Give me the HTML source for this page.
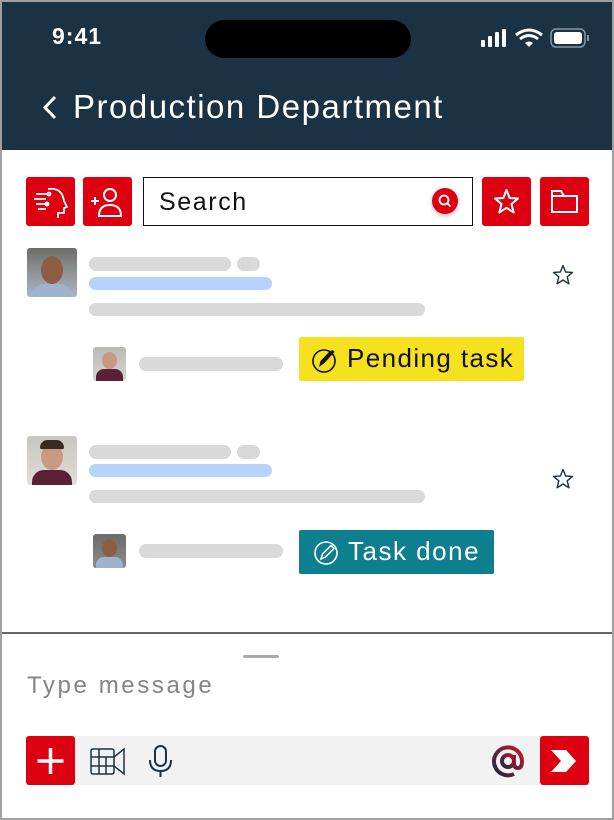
<!DOCTYPE html>
<html><head><meta charset="utf-8"><style>
*{margin:0;padding:0;box-sizing:border-box}
body{width:614px;height:820px;position:relative;background:#fff;font-family:"Liberation Sans",sans-serif;overflow:hidden}
.a{position:absolute}
.bar{position:absolute;height:14px;border-radius:7px;background:#d9d9d9}
.blue{background:#b5d3fb}
.btn{position:absolute;width:49px;height:49px;background:#dc0011;border-radius:3px}
.av{position:absolute;border-radius:3px;overflow:hidden}
</style></head><body>
<div class="a" style="left:0;top:0;width:614px;height:820px;border:2px solid #a0a0a0;border-top:2px solid #a0a0a0"></div>
<div class="a" style="left:2px;top:2px;width:610px;height:148px;background:#1b3245"></div>
<div class="a" style="left:52px;top:23px;color:#fff;font-size:23px;font-weight:bold;letter-spacing:1px">9:41</div>
<div class="a" style="left:205px;top:20px;width:206px;height:38px;background:#000;border-radius:19px"></div>
<svg class="a" style="left:478px;top:26px" width="115" height="24" viewBox="0 0 115 24">
<rect x="3" y="14" width="4" height="7" rx="1" fill="#fff"/><rect x="10" y="10" width="4" height="11" rx="1" fill="#fff"/><rect x="17" y="6" width="4" height="15" rx="1" fill="#fff"/><rect x="24" y="3" width="4" height="18" rx="1" fill="#fff"/>
<path d="M38 9 Q51 -1 64 9" stroke="#fff" stroke-width="3" fill="none"/><path d="M42 13 Q51 6 60 13" stroke="#fff" stroke-width="3" fill="none"/><path d="M47 17 L51 21 L55 17 Q51 14 47 17Z" fill="#fff"/>
<rect x="73" y="3" width="34" height="18" rx="5" stroke="#8795a3" stroke-width="1.5" fill="none"/><rect x="76" y="6" width="28" height="12" rx="3" fill="#fff"/><rect x="109" y="9" width="2" height="6" fill="#8795a3"/>
</svg>
<svg class="a" style="left:40px;top:94px" width="20" height="28"><path d="M15 3 L5 13.5 L15 24" stroke="#fff" stroke-width="3" fill="none"/></svg>
<div class="a" style="left:73px;top:88px;color:#fff;font-size:33px;letter-spacing:1.5px">Production Department</div>

<div class="btn" style="left:26px;top:177px"><svg width="49" height="49" viewBox="0 0 49 49" fill="none" stroke="#fff" stroke-width="1.8"><path d="M22 12 Q36 10 38 24 L41 30 L38 31 L38 36 L32 36 L32 41"/><path d="M10 17 H22 M8 22 H20 M10 27 H22 M12 32 H20"/><circle cx="23" cy="17" r="1.5"/><circle cx="21" cy="27" r="1.5"/></svg></div>
<div class="btn" style="left:83px;top:177px"><svg width="49" height="49" viewBox="0 0 49 49" fill="none" stroke="#fff" stroke-width="2"><circle cx="27" cy="18" r="6"/><path d="M16 39 Q16 28 27 28 Q38 28 38 39 Z"/><path d="M8 24 H16 M12 20 V28"/></svg></div>
<div class="a" style="left:143px;top:177px;width:330px;height:49px;border:1.5px solid #111;background:#fff"></div>
<div class="a" style="left:159px;top:188px;font-size:25px;color:#111;letter-spacing:1.6px">Search</div>
<div class="a" style="left:432px;top:188px;width:26px;height:26px;border-radius:50%;background:#dc0011;box-shadow:0 2px 4px rgba(0,0,0,.25)"><svg width="26" height="26"><circle cx="12" cy="12" r="4.5" stroke="#fff" stroke-width="1.8" fill="none"/><path d="M15 15 L18.5 18.5" stroke="#fff" stroke-width="1.8"/></svg></div>
<div class="btn" style="left:482px;top:177px"><svg width="49" height="49" viewBox="0 0 49 49"><path d="M24.5 13 L27.6 21 L36 21.5 L29.5 27 L31.7 35.5 L24.5 30.8 L17.3 35.5 L19.5 27 L13 21.5 L21.4 21Z" stroke="#fff" stroke-width="2" fill="none" stroke-linejoin="round"/></svg></div>
<div class="btn" style="left:540px;top:177px"><svg width="49" height="49" viewBox="0 0 49 49"><path d="M12 14 H21 L24 19 H37 V35 H12 Z M12 19 H24" stroke="#fff" stroke-width="2" fill="none"/></svg></div>

<!-- message 1 -->
<div class="av" style="left:27px;top:248px;width:50px;height:49px;background:linear-gradient(#6d6b67,#8a8c8d 40%,#a9b7c7)"><div class="a" style="left:14px;top:8px;width:22px;height:28px;border-radius:50%;background:#8b5e44"></div><div class="a" style="left:5px;top:36px;width:40px;height:20px;border-radius:12px 12px 0 0;background:#9fb3cc"></div></div>
<div class="bar" style="left:89px;top:257px;width:142px"></div>
<div class="bar" style="left:237px;top:257px;width:23px"></div>
<div class="bar blue" style="left:89px;top:277px;width:183px;height:13px"></div>
<div class="bar" style="left:89px;top:303px;width:336px;height:13px"></div>
<svg class="a" style="left:551px;top:263px" width="24" height="24" viewBox="0 0 24 24"><path d="M12 2.5 L14.6 9 L21.5 9.4 L16.2 13.8 L17.9 20.8 L12 17 L6.1 20.8 L7.8 13.8 L2.5 9.4 L9.4 9Z" stroke="#1b3245" stroke-width="1.4" fill="none" stroke-linejoin="round"/></svg>
<div class="av" style="left:93px;top:347px;width:33px;height:34px;background:linear-gradient(#b9b9b5,#d6d4cf)"><div class="a" style="left:9px;top:5px;width:15px;height:17px;border-radius:50%;background:#c99a82"></div><div class="a" style="left:3px;top:22px;width:27px;height:14px;border-radius:8px 8px 0 0;background:#5a2136"></div></div>
<div class="bar" style="left:139px;top:357px;width:144px"></div>
<div class="a" style="left:299px;top:337px;width:225px;height:44px;background:#f6e11e;border-radius:2px"></div>
<svg class="a" style="left:310px;top:345px" width="30" height="30" viewBox="0 0 30 30"><circle cx="14" cy="16" r="11" stroke="#111" stroke-width="1.6" fill="none"/><path d="M9 22 L10.5 16 L20 6 Q23 4 24.5 7 L14.5 18 Z" fill="#111"/></svg>
<div class="a" style="left:347px;top:343px;font-size:26px;color:#111;letter-spacing:1.4px">Pending task</div>

<!-- message 2 -->
<div class="av" style="left:27px;top:436px;width:50px;height:49px;background:linear-gradient(#c8c6c1,#e0ddd7)"><div class="a" style="left:14px;top:7px;width:22px;height:27px;border-radius:50%;background:#c99a82"></div><div class="a" style="left:13px;top:4px;width:24px;height:9px;border-radius:10px 10px 2px 2px;background:#3a2a20"></div><div class="a" style="left:5px;top:34px;width:40px;height:20px;border-radius:12px 12px 0 0;background:#5a2136"></div></div>
<div class="bar" style="left:89px;top:445px;width:142px"></div>
<div class="bar" style="left:237px;top:445px;width:23px"></div>
<div class="bar blue" style="left:89px;top:464px;width:183px;height:13px"></div>
<div class="bar" style="left:89px;top:490px;width:336px;height:13px"></div>
<svg class="a" style="left:551px;top:467px" width="24" height="24" viewBox="0 0 24 24"><path d="M12 2.5 L14.6 9 L21.5 9.4 L16.2 13.8 L17.9 20.8 L12 17 L6.1 20.8 L7.8 13.8 L2.5 9.4 L9.4 9Z" stroke="#1b3245" stroke-width="1.4" fill="none" stroke-linejoin="round"/></svg>
<div class="av" style="left:93px;top:534px;width:33px;height:34px;background:linear-gradient(#6d6b67,#8a8c8d)"><div class="a" style="left:9px;top:5px;width:15px;height:18px;border-radius:50%;background:#8b5e44"></div><div class="a" style="left:3px;top:23px;width:27px;height:13px;border-radius:8px 8px 0 0;background:#9fb3cc"></div></div>
<div class="bar" style="left:139px;top:544px;width:144px"></div>
<div class="a" style="left:299px;top:530px;width:195px;height:44px;background:#0e7f8e;border-radius:2px"></div>
<svg class="a" style="left:312px;top:538px" width="30" height="30" viewBox="0 0 30 30"><circle cx="14" cy="15" r="11" stroke="#fff" stroke-width="1.6" fill="none"/><path d="M9 21 L10.5 16 L19 7.5 L22 10.5 L13.5 19 Z" stroke="#fff" stroke-width="1.5" fill="none"/></svg>
<div class="a" style="left:348px;top:536px;font-size:26px;color:#fff;letter-spacing:1.5px">Task done</div>

<!-- bottom -->
<div class="a" style="left:2px;top:632px;width:610px;height:1.5px;background:#666"></div>
<div class="a" style="left:243px;top:655px;width:36px;height:3px;border-radius:2px;background:#aaa"></div>
<div class="a" style="left:27px;top:672px;font-size:24px;color:#858585;letter-spacing:2.6px">Type message</div>
<div class="a" style="left:26px;top:736px;width:563px;height:49px;background:#f2f2f2"></div>
<div class="btn" style="left:26px;top:736px"><svg width="49" height="49"><path d="M24.5 12 V38 M11.5 25 H37.5" stroke="#fff" stroke-width="3.5"/></svg></div>
<svg class="a" style="left:88px;top:744px" width="40" height="34" viewBox="0 0 40 34" fill="none" stroke="#1b3245" stroke-width="1.5"><rect x="3" y="5" width="23" height="25" rx="2"/><path d="M3 13 H26 M3 22 H26 M11 5 V30 M18 13 V30 M26 13 L36 5 V30 L26 22"/></svg>
<svg class="a" style="left:146px;top:744px" width="30" height="34" viewBox="0 0 30 34" fill="none" stroke="#1b3245" stroke-width="2"><rect x="9" y="2" width="11" height="20" rx="5.5"/><path d="M4 16 Q4 27 14.5 27 Q25 27 25 16 M14.5 27 V33"/></svg>
<svg class="a" style="left:490px;top:743px" width="36" height="36" viewBox="0 0 36 36"><defs><linearGradient id="g" x1="0" y1="1" x2="1" y2="0"><stop offset="0" stop-color="#1b2a40"/><stop offset="1" stop-color="#c0182a"/></linearGradient></defs><circle cx="18" cy="18" r="6" stroke="url(#g)" stroke-width="4" fill="none"/><path d="M24 12 V20 Q24 25 28 25 Q32 25 32 18 A14 14 0 1 0 24 31" stroke="url(#g)" stroke-width="4" fill="none"/></svg>
<div class="btn" style="left:540px;top:736px"><svg width="49" height="49"><path d="M11 14 H26 L36 25 L26 36 H11 L21 25 Z" fill="#fff"/></svg></div>
</body></html>
